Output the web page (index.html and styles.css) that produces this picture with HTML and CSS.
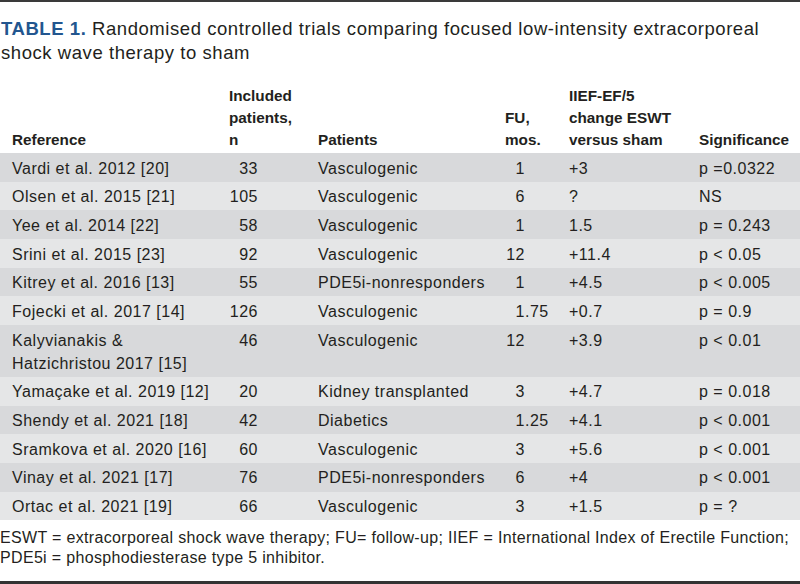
FILE: index.html
```html
<!DOCTYPE html>
<html>
<head>
<meta charset="utf-8">
<link rel="stylesheet" href="styles.css">
</head>
<body>
<div class="page">
  <p class="title"><span class="label">TABLE 1.</span> Randomised controlled trials comparing focused low-intensity extracorporeal<br>shock wave therapy to sham</p>
  <table class="trials">
    <colgroup>
      <col class="c-ref"><col class="c-n"><col class="c-pat"><col class="c-fu"><col class="c-iief"><col class="c-sig">
    </colgroup>
    <thead>
      <tr>
        <th class="first">Reference</th>
        <th>Included<br>patients,<br>n</th>
        <th>Patients</th>
        <th>FU,<br>mos.</th>
        <th>IIEF-EF/5<br>change ESWT<br>versus sham</th>
        <th>Significance</th>
      </tr>
    </thead>
    <tbody>
      <tr><td class="first">Vardi et al. 2012 [20]</td><td><span class="num">33</span></td><td>Vasculogenic</td><td><span class="int">1</span></td><td>+3</td><td>p =0.0322</td></tr>
      <tr><td class="first">Olsen et al. 2015 [21]</td><td><span class="num">105</span></td><td>Vasculogenic</td><td><span class="int">6</span></td><td>?</td><td>NS</td></tr>
      <tr><td class="first">Yee et al. 2014 [22]</td><td><span class="num">58</span></td><td>Vasculogenic</td><td><span class="int">1</span></td><td>1.5</td><td>p = 0.243</td></tr>
      <tr><td class="first">Srini et al. 2015 [23]</td><td><span class="num">92</span></td><td>Vasculogenic</td><td><span class="int">12</span></td><td>+11.4</td><td>p &lt; 0.05</td></tr>
      <tr><td class="first">Kitrey et al. 2016 [13]</td><td><span class="num">55</span></td><td>PDE5i-nonresponders</td><td><span class="int">1</span></td><td>+4.5</td><td>p &lt; 0.005</td></tr>
      <tr><td class="first">Fojecki et al. 2017 [14]</td><td><span class="num">126</span></td><td>Vasculogenic</td><td><span class="int">1</span>.75</td><td>+0.7</td><td>p = 0.9</td></tr>
      <tr><td class="first">Kalyvianakis &amp;<br>Hatzichristou 2017 [15]</td><td><span class="num">46</span></td><td>Vasculogenic</td><td><span class="int">12</span></td><td>+3.9</td><td>p &lt; 0.01</td></tr>
      <tr><td class="first">Yamaçake et al. 2019 [12]</td><td><span class="num">20</span></td><td>Kidney transplanted</td><td><span class="int">3</span></td><td>+4.7</td><td>p = 0.018</td></tr>
      <tr><td class="first">Shendy et al. 2021 [18]</td><td><span class="num">42</span></td><td>Diabetics</td><td><span class="int">1</span>.25</td><td>+4.1</td><td>p &lt; 0.001</td></tr>
      <tr><td class="first">Sramkova et al. 2020 [16]</td><td><span class="num">60</span></td><td>Vasculogenic</td><td><span class="int">3</span></td><td>+5.6</td><td>p &lt; 0.001</td></tr>
      <tr><td class="first">Vinay et al. 2021 [17]</td><td><span class="num">76</span></td><td>PDE5i-nonresponders</td><td><span class="int">6</span></td><td>+4</td><td>p &lt; 0.001</td></tr>
      <tr><td class="first">Ortac et al. 2021 [19]</td><td><span class="num">66</span></td><td>Vasculogenic</td><td><span class="int">3</span></td><td>+1.5</td><td>p = ?</td></tr>
    </tbody>
  </table>
  <p class="note">ESWT = extracorporeal shock wave therapy; FU= follow-up; IIEF = International Index of Erectile Function;<br>PDE5i = phosphodiesterase type 5 inhibitor.</p>
</div>
</body>
</html>
```
FILE: styles.css
```css
html, body {
  margin: 0;
  padding: 0;
  background: #ffffff;
}

.page {
  width: 800px;
  height: 584px;
  box-sizing: border-box;
  border-top: 2px solid #3a3a3a;
  border-bottom: 3px solid #333333;
  font-family: "Liberation Sans", Arial, sans-serif;
  color: #231f20;
  display: flex;
  flex-direction: column;
}

.title {
  margin: 15px 0 0 1px;
  font-size: 18.5px;
  line-height: 24px;
  letter-spacing: 0.56px;
}

.label {
  color: #22568f;
  font-weight: bold;
}

.trials {
  margin-top: 20px;
  width: 800px;
  border-collapse: collapse;
  table-layout: fixed;
  font-size: 16px;
}

.c-ref { width: 229px; }
.c-n { width: 89px; }
.c-pat { width: 187px; }
.c-fu { width: 64px; }
.c-iief { width: 130px; }
.c-sig { width: 101px; }

.trials th {
  font-size: 15.3px;
  font-weight: bold;
  text-align: left;
  vertical-align: bottom;
  line-height: 22px;
  padding: 0 0 2px 0;
}

.trials td {
  line-height: 23px;
  padding: 3.5px 0 2.2px 0;
  letter-spacing: 0.5px;
  vertical-align: top;
  white-space: nowrap;
}

.trials th.first,
.trials td.first {
  padding-left: 12px;
}

.trials tbody tr:nth-child(odd) {
  background: #d8d9db;
}

.trials tbody tr:nth-child(even) {
  background: #e5e6e7;
}

.num {
  display: inline-block;
  width: 29px;
  text-align: right;
}

.int {
  display: inline-block;
  width: 20px;
  text-align: right;
}

.note {
  margin: 8px 0 0 0;
  font-size: 16px;
  line-height: 20px;
  letter-spacing: 0.33px;
}
```
